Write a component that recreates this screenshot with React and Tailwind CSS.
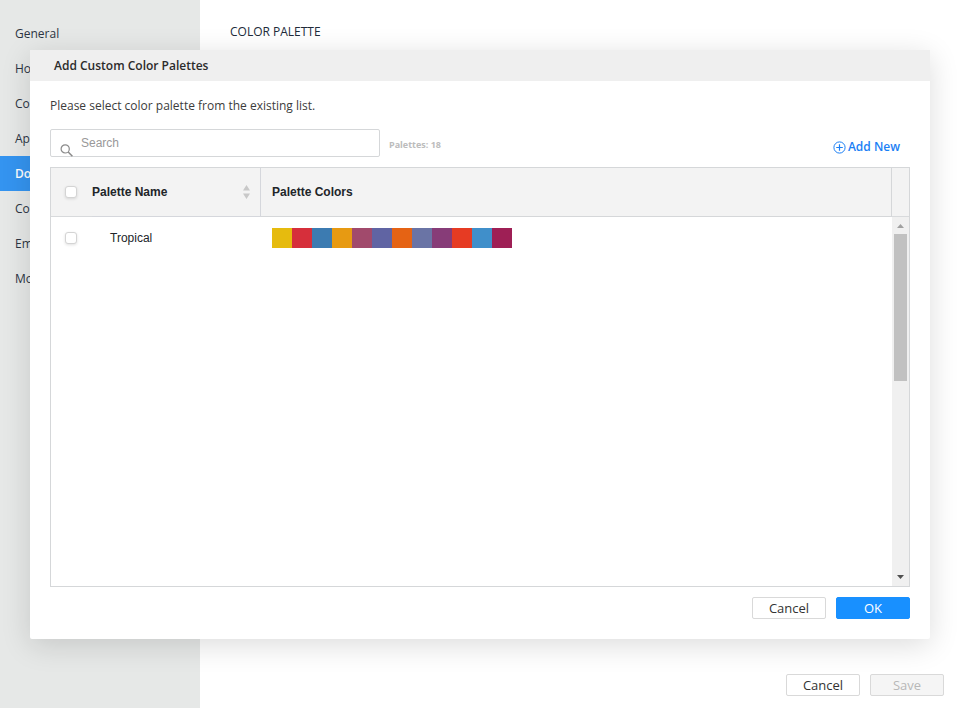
import React from "react";

const navItems = [
  "General",
  "Home",
  "Core",
  "Apps",
  "Docs",
  "Color",
  "Email",
  "More",
];

const swatches = [
  "bg-[#e6bb0e]",
  "bg-[#d62f3b]",
  "bg-[#3c7bb1]",
  "bg-[#e79a12]",
  "bg-[#a14a6c]",
  "bg-[#6064a3]",
  "bg-[#e56314]",
  "bg-[#6a74a5]",
  "bg-[#873c78]",
  "bg-[#e63b23]",
  "bg-[#408fca]",
  "bg-[#9e1f55]",
];

const buttonBase =
  "flex h-[22px] w-[74px] items-center justify-center rounded-xs border pt-px text-[13px]";

function CheckBox({ label }) {
  return (
    <input
      type="checkbox"
      aria-label={label}
      className="block size-3 appearance-none rounded-[3px] border border-[#d4d4d4] bg-white shadow-[0_1px_3px_rgba(0,0,0,0.12)] checked:bg-[#1890ff]"
    />
  );
}

function Sidebar() {
  return (
    <nav className="w-[200px] shrink-0 bg-[#e6e8e7] pt-4">
      {navItems.map((item) => (
        <a
          key={item}
          href="#"
          className={
            item === "Docs"
              ? "flex h-[35px] items-center bg-[#3494f0] px-[15px] font-semibold text-white"
              : "flex h-[35px] items-center px-[15px] pt-px text-[#2c3543]"
          }
        >
          {item}
        </a>
      ))}
    </nav>
  );
}

function PaletteGrid() {
  return (
    <div className="flex h-[420px] border border-[#d5d7d9] font-['Liberation_Sans',sans-serif] text-[#212529]">
      <div className="min-w-0 flex-1">
        <table className="w-full table-fixed border-separate border-spacing-0 text-left">
          <thead className="bg-[#f3f3f3]">
            <tr className="h-[49px]">
              <th className="w-[41px] border-b border-[#d8dadc] pl-[14px]">
                <CheckBox label="Select all palettes" />
              </th>
              <th className="w-[169px] border-r border-b border-[#d5d7dc] font-bold">
                <div className="flex items-center justify-between pr-[10px]">
                  Palette Name
                  <svg width="7" height="14" viewBox="0 0 7 14" fill="#c8c8c8">
                    <path d="M3.5 0 7 5.5H0zM3.5 14 0 8.5h7z" />
                  </svg>
                </div>
              </th>
              <th className="border-r border-b border-[#d5d7d9] pl-[11px] font-bold">
                Palette Colors
              </th>
            </tr>
          </thead>
          <tbody>
            <tr className="h-[42px]">
              <td className="pl-[14px]">
                <CheckBox label="Select Tropical" />
              </td>
              <td className="pl-[18px]">Tropical</td>
              <td className="pl-[11px]">
                <div className="flex">
                  {swatches.map((color) => (
                    <span key={color} className={`size-5 ${color}`} />
                  ))}
                </div>
              </td>
            </tr>
          </tbody>
        </table>
      </div>
      <div className="flex w-[17px] flex-col bg-[#f0f0f0]">
        <div className="h-[49px] border-b border-[#d8dadc] bg-[#f3f3f3]" />
        <div className="flex h-[17px] items-center justify-center">
          <svg width="7" height="4" viewBox="0 0 7 4" fill="#a0a0a0">
            <path d="M3.5 0 7 4H0z" />
          </svg>
        </div>
        <div className="mx-auto h-[147px] w-[13px] bg-[#c1c1c1]" />
        <div className="mt-auto flex h-[19px] items-center justify-center">
          <svg width="7" height="4" viewBox="0 0 7 4" fill="#505050">
            <path d="M3.5 4 0 0h7z" />
          </svg>
        </div>
      </div>
    </div>
  );
}

function PaletteDialog() {
  return (
    <section
      role="dialog"
      aria-labelledby="dialog-title"
      className="absolute inset-x-[30px] top-[50px] rounded-xs bg-white shadow-[0_6px_30px_rgba(0,0,0,0.14)]"
    >
      <h2
        id="dialog-title"
        className="flex h-[31px] items-center bg-[#efefef] px-6 font-semibold text-[#2b2b2b]"
      >
        Add Custom Color Palettes
      </h2>
      <div className="px-5 pt-4 pb-5">
        <p className="leading-[18px] font-medium text-[#3c3c3c]">
          Please select color palette from the existing list.
        </p>
        <div className="mt-[14px] flex h-[28px] items-center">
          <label className="flex h-full w-[330px] items-start rounded-xs border border-[#d5d7d9] pl-[9px]">
            <svg
              className="mt-[14px] shrink-0"
              width="13"
              height="13"
              viewBox="0 0 13 13"
              fill="none"
              stroke="#8a8a8a"
              strokeWidth="1.2"
            >
              <circle cx="5.2" cy="4.9" r="4.1" />
              <path d="M8.2 8 12.4 12.2" strokeWidth="1.5" />
            </svg>
            <input
              type="text"
              placeholder="Search"
              aria-label="Search"
              className="ml-2 h-[26px] min-w-0 flex-1 bg-transparent font-['Liberation_Sans',sans-serif] outline-none placeholder:text-[#999999]"
            />
          </label>
          <span className="ml-[9px] pt-[3px] text-[9px] font-bold text-[#bcbcbc]">
            Palettes: 18
          </span>
          <button
            type="button"
            className="mr-[10px] ml-auto flex items-center gap-[2px] pt-2 font-semibold text-[#1b7ff5]"
          >
            <svg
              width="13"
              height="13"
              viewBox="0 0 13 13"
              fill="none"
              stroke="currentColor"
            >
              <circle cx="6.5" cy="6.5" r="5.6" />
              <path d="M6.5 3.2v6.6M3.2 6.5h6.6" strokeWidth="1.2" />
            </svg>
            Add New
          </button>
        </div>
        <div className="mt-[10px]">
          <PaletteGrid />
        </div>
        <div className="mt-[10px] flex justify-end gap-[10px]">
          <button
            type="button"
            className={`${buttonBase} border-[#d9d9d9] bg-white text-[#333333]`}
          >
            Cancel
          </button>
          <button
            type="button"
            className={`${buttonBase} border-[#1890ff] bg-[#1890ff] font-medium text-white`}
          >
            OK
          </button>
        </div>
      </div>
    </section>
  );
}

export default function App() {
  return (
    <div className="relative flex min-h-screen bg-white font-['Open_Sans','Noto_Sans',sans-serif] text-xs">
      <Sidebar />
      <main className="flex min-w-0 flex-1 flex-col">
        <h1 className="px-[30px] pt-6 text-xs text-[#212b3a]">
          COLOR PALETTE
        </h1>
        <footer className="mt-auto flex justify-end gap-[10px] pr-4 pb-3">
          <button
            type="button"
            className={`${buttonBase} border-[#d9d9d9] bg-white text-[#333333]`}
          >
            Cancel
          </button>
          <button
            type="button"
            disabled
            className={`${buttonBase} border-[#d9d9d9] bg-[#f5f5f5] text-[#b8b8b8]`}
          >
            Save
          </button>
        </footer>
      </main>
      <PaletteDialog />
    </div>
  );
}
